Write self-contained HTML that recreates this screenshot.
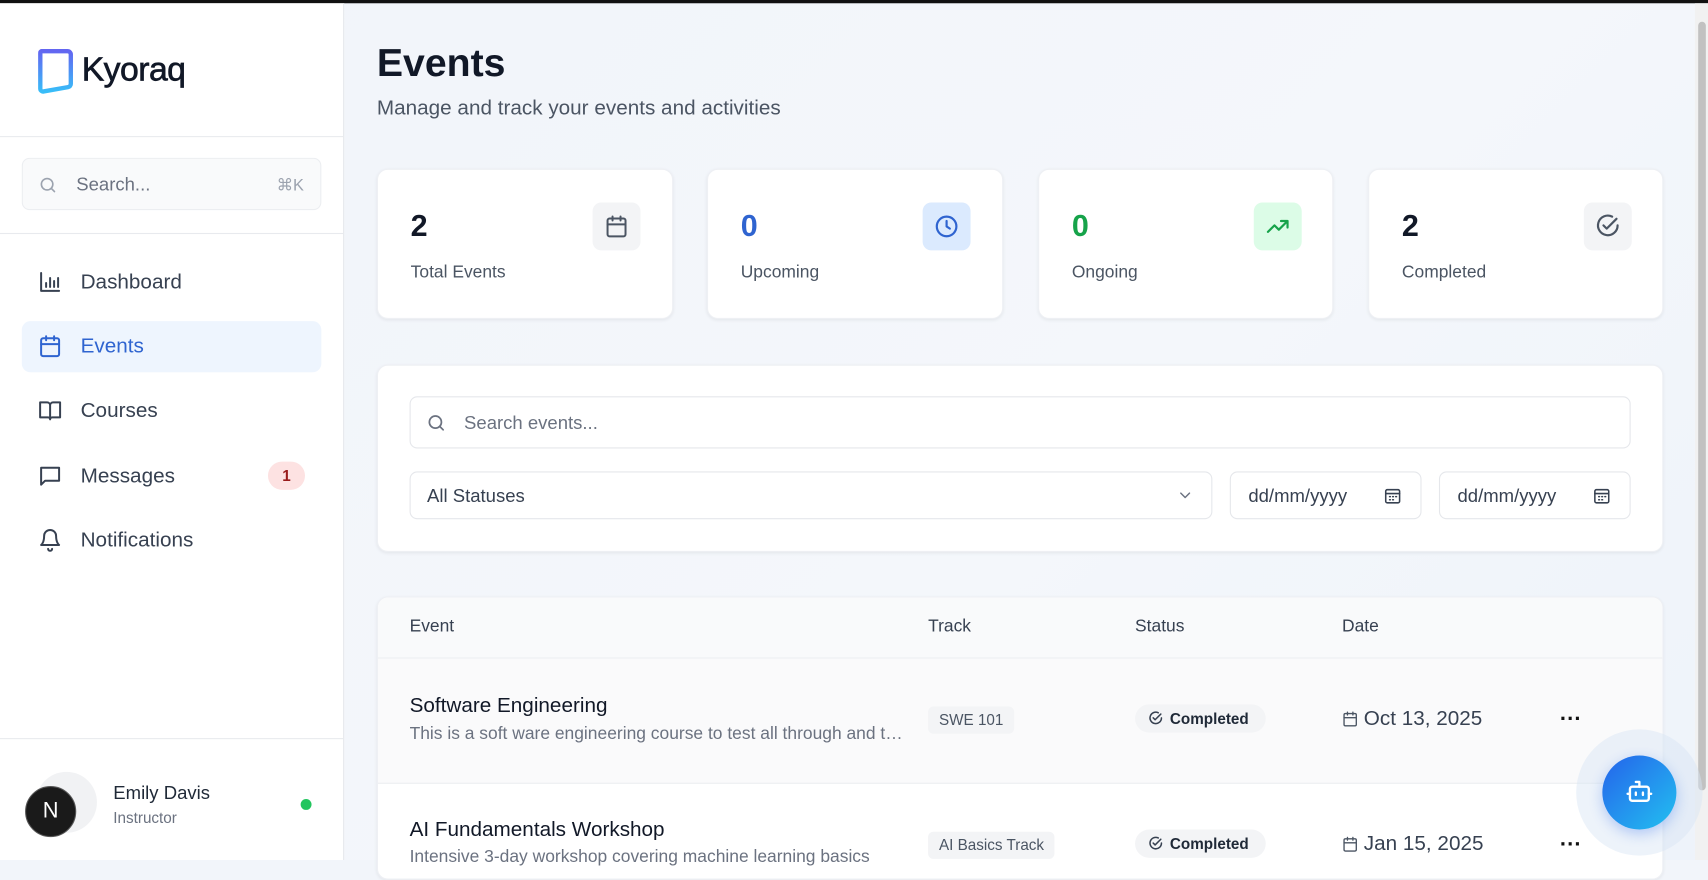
<!DOCTYPE html>
<html><head><meta charset="utf-8"><style>
html,body{margin:0;padding:0;width:1708px;height:860px;overflow:hidden;background:#f2f5fa}
#w{position:absolute;left:0;top:0;width:1568px;height:790px;transform:scale(1.08929,1.08861);transform-origin:0 0;font-family:"Liberation Sans",sans-serif;color:#111827;background:linear-gradient(135deg,#f1f4fa,#f4f7fb 60%,#eef3fa)}
.a{position:absolute}
svg{position:absolute;fill:none;stroke-linecap:round;stroke-linejoin:round}
.card{position:absolute;background:#fff;border-radius:10px;box-shadow:0 1px 3px rgba(0,0,0,.06);border:1px solid #eef0f4;box-sizing:border-box}
.num{position:absolute;left:30px;top:36px;font-size:28px;font-weight:bold}
.lbl{position:absolute;left:30px;top:86px;font-size:16px;color:#4b5563}
.ib{position:absolute;left:197px;top:30px;width:44px;height:44px;border-radius:8px}
.nav{position:absolute;left:74px;font-size:19px;color:#374151}
.inp{position:absolute;border:1px solid #e5e7eb;border-radius:7px;background:#fff;box-sizing:border-box;font-size:17px;color:#374151}
.badge{position:absolute;background:#f3f4f6;border-radius:5px;font-size:14px;color:#4b5563;padding:0 10px;line-height:25px}
.st{position:absolute;background:#f3f4f6;border-radius:13px;font-size:14px;font-weight:bold;color:#1f2937;line-height:26px;padding:0 16px 0 32px}
</style></head><body><div id="w">
<div class="a" style="left:0;top:0;width:1568px;height:3px;background:#111"></div>
<div class="a" style="left:0;top:3px;width:315px;height:787px;background:#fff;border-right:1px solid #e5e7eb"></div>
<svg style="left:33px;top:43px" width="36" height="46" viewBox="0 0 36 46"><defs><linearGradient id="g" x1="0" y1="0" x2="0" y2="1"><stop offset="0" stop-color="#6366f1"/><stop offset="1" stop-color="#38bdf8"/></linearGradient></defs><path d="M5 4h24a3 3 0 0 1 3 3v27a3 3 0 0 1-2.5 3L7 41a2.5 2.5 0 0 1-3-2.5V6a2 2 0 0 1 1-2z" stroke="url(#g)" stroke-width="4"/></svg>
<div class="a" style="left:75px;top:46px;font-size:31px;color:#111827;letter-spacing:-.5px;-webkit-text-stroke:.6px #111827">Kyoraq</div>
<div class="a" style="left:0;top:125px;width:315px;height:1px;background:#e8eaee"></div>
<div class="a" style="left:20px;top:145px;width:275px;height:48px;background:#f9fafb;border:1px solid #eceef1;border-radius:7px;box-sizing:border-box"></div>
<svg style="left:35px;top:161px" width="18" height="18" viewBox="0 0 24 24" stroke="#9ca3af" stroke-width="2"><circle cx="11" cy="11" r="7"/><path d="M20 20l-4-4"/></svg>
<div class="a" style="left:70px;top:160px;font-size:17px;color:#6b7280">Search...</div>
<div class="a" style="left:254px;top:161px;font-size:15px;color:#9ca3af">⌘K</div>
<div class="a" style="left:0;top:214px;width:315px;height:1px;background:#e8eaee"></div>
<svg style="left:35px;top:248px" width="22" height="22" viewBox="0 0 24 24" stroke="#374151" stroke-width="2"><path d="M3 3v18h18M8 17v-4M12 17V8M16 17v-6M20 17v-9"/></svg>
<div class="nav" style="top:249px">Dashboard</div>
<div class="a" style="left:20px;top:295px;width:275px;height:47px;background:#eef5fe;border-radius:8px"></div>
<svg style="left:35px;top:307px" width="22" height="22" viewBox="0 0 24 24" stroke="#2f64d0" stroke-width="2"><rect x="3" y="4" width="18" height="18" rx="2"/><path d="M16 2v4M8 2v4M3 10h18"/></svg>
<div class="nav" style="top:308px;color:#2f64d0">Events</div>
<svg style="left:35px;top:366px" width="22" height="22" viewBox="0 0 24 24" stroke="#374151" stroke-width="2"><path d="M2 4h7a3 3 0 0 1 3 3v14a2 2 0 0 0-2-2H2zM22 4h-7a3 3 0 0 0-3 3v14a2 2 0 0 1 2-2h8z"/></svg>
<div class="nav" style="top:367px">Courses</div>
<svg style="left:35px;top:426px" width="22" height="22" viewBox="0 0 24 24" stroke="#374151" stroke-width="2"><path d="M3 4h18v13H7l-4 4z"/></svg>
<div class="nav" style="top:427px">Messages</div>
<div class="a" style="left:246px;top:424px;width:34px;height:26px;border-radius:13px;background:#fde2e2;color:#991b1b;font-size:14px;font-weight:bold;text-align:center;line-height:26px">1</div>
<svg style="left:35px;top:485px" width="22" height="22" viewBox="0 0 24 24" stroke="#374151" stroke-width="2"><path d="M6 8a6 6 0 0 1 12 0c0 7 3 9 3 9H3s3-2 3-9M10 21a2 2 0 0 0 4 0"/></svg>
<div class="nav" style="top:486px">Notifications</div>
<div class="a" style="left:0;top:678px;width:315px;height:1px;background:#e8eaee"></div>
<div class="a" style="left:33px;top:709px;width:56px;height:56px;border-radius:50%;background:#f1f2f4"></div>
<div class="a" style="left:23px;top:722px;width:47px;height:47px;border-radius:50%;background:#1a1a1a;border:1px solid #555;box-sizing:border-box;color:#fff;font-size:20px;text-align:center;line-height:45px">N</div>
<div class="a" style="left:104px;top:719px;font-size:17px;color:#1f2937">Emily Davis</div>
<div class="a" style="left:104px;top:743px;font-size:14px;color:#6b7280">Instructor</div>
<div class="a" style="left:276px;top:734px;width:10px;height:10px;border-radius:50%;background:#22c55e"></div>
<div class="a" style="left:346px;top:37px;font-size:36px;font-weight:bold;color:#111827">Events</div>
<div class="a" style="left:346px;top:89px;font-size:19px;color:#4b5563">Manage and track your events and activities</div>
<div class="card" style="left:346px;top:155px;width:272px;height:138px"><div class="num">2</div><div class="lbl">Total Events</div><div class="ib" style="background:#f3f4f6"><svg style="left:11px;top:11px" width="22" height="22" viewBox="0 0 24 24" stroke="#4b5563" stroke-width="2"><rect x="3" y="4" width="18" height="18" rx="2"/><path d="M16 2v4M8 2v4M3 10h18"/></svg></div></div>
<div class="card" style="left:649px;top:155px;width:272px;height:138px"><div class="num" style="color:#2f64d0">0</div><div class="lbl">Upcoming</div><div class="ib" style="background:#dbeafe"><svg style="left:10px;top:10px" width="24" height="24" viewBox="0 0 24 24" stroke="#2f64d0" stroke-width="2"><circle cx="12" cy="12" r="9"/><path d="M12 7v5l3 2"/></svg></div></div>
<div class="card" style="left:953px;top:155px;width:271px;height:138px"><div class="num" style="color:#16a34a">0</div><div class="lbl">Ongoing</div><div class="ib" style="background:#dcfce7"><svg style="left:10px;top:10px" width="24" height="24" viewBox="0 0 24 24" stroke="#16a34a" stroke-width="2"><path d="M3 17l6-6 4 4 8-8M15 7h6v6"/></svg></div></div>
<div class="card" style="left:1256px;top:155px;width:271px;height:138px"><div class="num">2</div><div class="lbl">Completed</div><div class="ib" style="background:#f3f4f6"><svg style="left:10px;top:10px" width="24" height="24" viewBox="0 0 24 24" stroke="#4b5563" stroke-width="2"><path d="M21 11a9 9 0 1 1-5-8"/><path d="M8 11l3 3 9-9"/></svg></div></div>
<div class="card" style="left:346px;top:335px;width:1181px;height:172px"></div>
<div class="inp" style="left:376px;top:364px;width:1121px;height:48px"></div>
<svg style="left:391px;top:379px" width="19" height="19" viewBox="0 0 24 24" stroke="#6b7280" stroke-width="2"><circle cx="11" cy="11" r="7"/><path d="M20 20l-4-4"/></svg>
<div class="a" style="left:426px;top:379px;font-size:17px;color:#6b7280">Search events...</div>
<div class="inp" style="left:376px;top:433px;width:737px;height:44px;padding:12px 15px">All Statuses</div>
<svg style="left:1080px;top:447px" width="16" height="16" viewBox="0 0 24 24" stroke="#6b7280" stroke-width="2"><path d="M6 9l6 6 6-6"/></svg>
<div class="inp" style="left:1129px;top:433px;width:176px;height:44px;padding:12px 16px">dd/mm/yyyy</div>
<div class="inp" style="left:1321px;top:433px;width:176px;height:44px;padding:12px 16px">dd/mm/yyyy</div>
<svg style="left:1270px;top:447px" width="17" height="17" viewBox="0 0 24 24" stroke="#374151" stroke-width="2"><rect x="3" y="4" width="18" height="17" rx="2"/><path d="M3 9h18M8 13h1M12 13h1M16 13h1M8 17h1M12 17h1"/></svg>
<svg style="left:1462px;top:447px" width="17" height="17" viewBox="0 0 24 24" stroke="#374151" stroke-width="2"><rect x="3" y="4" width="18" height="17" rx="2"/><path d="M3 9h18M8 13h1M12 13h1M16 13h1M8 17h1M12 17h1"/></svg>
<div class="card" style="left:346px;top:548px;width:1181px;height:260px;overflow:hidden">
<div class="a" style="left:0;top:0;width:1181px;height:55px;background:#f9fafb;border-bottom:1px solid #eceef1"></div>
<div class="a" style="left:0;top:56px;width:1181px;height:114px;background:#fafafb;border-bottom:1px solid #eceef1"></div>
</div>
<div class="a" style="left:376px;top:567px;font-size:16px;color:#374151">Event</div>
<div class="a" style="left:852px;top:567px;font-size:16px;color:#374151">Track</div>
<div class="a" style="left:1042px;top:567px;font-size:16px;color:#374151">Status</div>
<div class="a" style="left:1232px;top:567px;font-size:16px;color:#374151">Date</div>
<div class="a" style="left:376px;top:638px;font-size:19px;color:#111827">Software Engineering</div>
<div class="a" style="left:376px;top:666px;font-size:16px;color:#6b7280;width:455px;white-space:nowrap;overflow:hidden;text-overflow:ellipsis">This is a soft ware engineering course to test all through and through</div>
<div class="badge" style="left:852px;top:649px">SWE 101</div>
<div class="st" style="left:1042px;top:647px">Completed</div>
<svg style="left:1054px;top:653px" width="14" height="14" viewBox="0 0 24 24" stroke="#374151" stroke-width="2.4"><path d="M21 11a9 9 0 1 1-5-8"/><path d="M8 11l3 3 9-9"/></svg>
<svg style="left:1232px;top:653px" width="15" height="15" viewBox="0 0 24 24" stroke="#4b5563" stroke-width="2"><rect x="3" y="4" width="18" height="18" rx="2"/><path d="M16 2v4M8 2v4M3 10h18"/></svg>
<div class="a" style="left:1252px;top:650px;font-size:19px;color:#374151">Oct 13, 2025</div>
<div class="a" style="left:1432px;top:650px;font-size:20px;font-weight:bold;color:#111">···</div>
<div class="a" style="left:376px;top:752px;font-size:19px;color:#111827">AI Fundamentals Workshop</div>
<div class="a" style="left:376px;top:779px;font-size:16px;color:#6b7280;width:455px;white-space:nowrap;overflow:hidden;text-overflow:ellipsis">Intensive 3-day workshop covering machine learning basics</div>
<div class="badge" style="left:852px;top:764px">AI Basics Track</div>
<div class="st" style="left:1042px;top:762px">Completed</div>
<svg style="left:1054px;top:768px" width="14" height="14" viewBox="0 0 24 24" stroke="#374151" stroke-width="2.4"><path d="M21 11a9 9 0 1 1-5-8"/><path d="M8 11l3 3 9-9"/></svg>
<svg style="left:1232px;top:768px" width="15" height="15" viewBox="0 0 24 24" stroke="#4b5563" stroke-width="2"><rect x="3" y="4" width="18" height="18" rx="2"/><path d="M16 2v4M8 2v4M3 10h18"/></svg>
<div class="a" style="left:1252px;top:765px;font-size:19px;color:#374151">Jan 15, 2025</div>
<div class="a" style="left:1432px;top:765px;font-size:20px;font-weight:bold;color:#111">···</div>
<div class="a" style="left:1556px;top:3px;width:12px;height:787px;background:#f1f1f1"></div>
<div class="a" style="left:1559px;top:20px;width:7px;height:706px;border-radius:4px;background:#c1c1c1"></div>
<div class="a" style="left:1447px;top:670px;width:116px;height:116px;border-radius:50%;background:rgba(215,228,245,.45)"></div>
<div class="a" style="left:1471px;top:694px;width:68px;height:68px;border-radius:50%;background:linear-gradient(135deg,#2563eb,#22c0f0);box-shadow:0 4px 12px rgba(37,99,235,.3)"></div>
<svg style="left:1492px;top:714px" width="26" height="26" viewBox="0 0 24 24" stroke="#fff" stroke-width="2"><rect x="4" y="8" width="16" height="12" rx="2"/><path d="M12 8V4H9M2 14h2M20 14h2M9 13v2M15 13v2"/></svg>
</div></body></html>
